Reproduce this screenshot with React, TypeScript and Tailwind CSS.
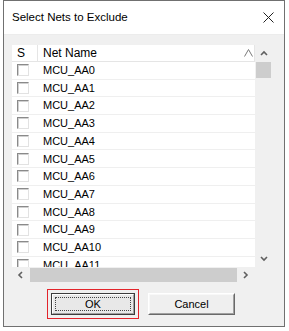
import React from 'react';

const nets = Array.from({ length: 12 }, (_, i) => `MCU_AA${i}`);

const Chevron = ({ dir }: { dir: 'up' | 'down' | 'left' | 'right' }) => {
  const d = {
    up: 'M1 5 L4 2 L7 5',
    down: 'M1 2 L4 5 L7 2',
    left: 'M5 1 L2 4 L5 7',
    right: 'M2 1 L5 4 L2 7',
  }[dir];
  return (
    <svg width="8" height="8" viewBox="0 0 8 8">
      <path d={d} fill="none" stroke="#606060" strokeWidth="1.6" />
    </svg>
  );
};

const Checkbox = () => (
  <div className="w-[12px] h-[12px] bg-white border border-t-[#8a8a8a] border-l-[#8a8a8a] border-b-[#e2e2e2] border-r-[#e2e2e2] shadow-[inset_1px_1px_0_#d0d0d0]" />
);

const App = () => {
  return (
    <div className="w-[289px] h-[331px] bg-white font-['Liberation_Sans',Arial,sans-serif] text-black">
      <div className="ml-[3px] w-[282px] h-[327px] border border-[#707070] flex flex-col">
        {/* title bar */}
        <div className="h-[34px] bg-white flex items-center justify-between pl-[8px] pr-[10px] border-b border-[#ececec]">
          <span className="text-[11.5px] leading-none">Select Nets to Exclude</span>
          <svg width="11" height="11" viewBox="0 0 11 11" className="mb-[1px]">
            <path d="M0.5 0.5 L10.5 10.5 M10.5 0.5 L0.5 10.5" stroke="#222" strokeWidth="1" />
          </svg>
        </div>

        {/* body */}
        <div className="flex-1 bg-[#f0f0f0] pt-[10px] pl-[8px]">
          <div className="w-[260px] h-[238px] grid grid-cols-[243px_17px] grid-rows-[222px_16px]">
            {/* list content */}
            <div className="bg-white overflow-hidden">
              <div className="h-[17px] flex border-b border-[#e5e5e5] text-[12px]">
                <div className="w-[26px] pl-[5px] border-r border-[#e5e5e5] flex items-center">S</div>
                <div className="flex-1 pl-[5px] flex items-center justify-between pr-[1px] border-r border-[#e5e5e5]">
                  <span>Net Name</span>
                  <svg width="9" height="8" viewBox="0 0 9 8">
                    <path d="M0.5 7.5 L4.5 0.5 L8.5 7.5" fill="none" stroke="#7a7a7a" strokeWidth="1" />
                  </svg>
                </div>
              </div>
              {nets.map((n) => (
                <div key={n} className="h-[17.7px] shrink-0 flex items-center border-b border-[#efefef] text-[11px]">
                  <div className="w-[26px] pl-[5px]">
                    <Checkbox />
                  </div>
                  <span className="pl-[5px]">{n}</span>
                </div>
              ))}
            </div>

            {/* vertical scrollbar */}
            <div className="bg-[#f0f0f0] flex flex-col items-center">
              <div className="h-[17px] flex items-center justify-center">
                <Chevron dir="up" />
              </div>
              <div className="w-[15px] h-[16px] bg-[#cdcdcd]" />
              <div className="flex-1" />
              <div className="h-[17px] flex items-center justify-center">
                <Chevron dir="down" />
              </div>
            </div>

            {/* horizontal scrollbar */}
            <div className="bg-[#f0f0f0] flex items-center">
              <div className="w-[18px] h-full flex items-center justify-center">
                <Chevron dir="left" />
              </div>
              <div className="flex-1 h-[14px] bg-[#cdcdcd]" />
              <div className="w-[18px] h-full flex items-center justify-center">
                <Chevron dir="right" />
              </div>
            </div>
            <div className="bg-[#f0f0f0]" />
          </div>

          {/* buttons */}
          <div className="flex items-center mt-[6px]">
            <div className="ml-[35px] border border-[#e3242b] p-[3px]">
              <div className="w-[84px] h-[22px] border border-[#3c3c3c] bg-[#e8e8e8]">
                <div className="h-full border border-t-white border-l-white border-b-[#a0a0a0] border-r-[#a0a0a0] p-[2px]">
                  <div className="h-full border border-dotted border-[#444] flex items-center justify-center text-[11px]">
                    OK
                  </div>
                </div>
              </div>
            </div>
            <div className="ml-[9px] w-[87px] h-[22px] border border-t-white border-l-white border-b-[#696969] border-r-[#696969] bg-[#efefef]">
              <div className="h-full border border-t-[#f8f8f8] border-l-[#f8f8f8] border-b-[#a0a0a0] border-r-[#a0a0a0] flex items-center justify-center text-[11px]">
                Cancel
              </div>
            </div>
          </div>
        </div>
      </div>
    </div>
  );
};

export default App;
